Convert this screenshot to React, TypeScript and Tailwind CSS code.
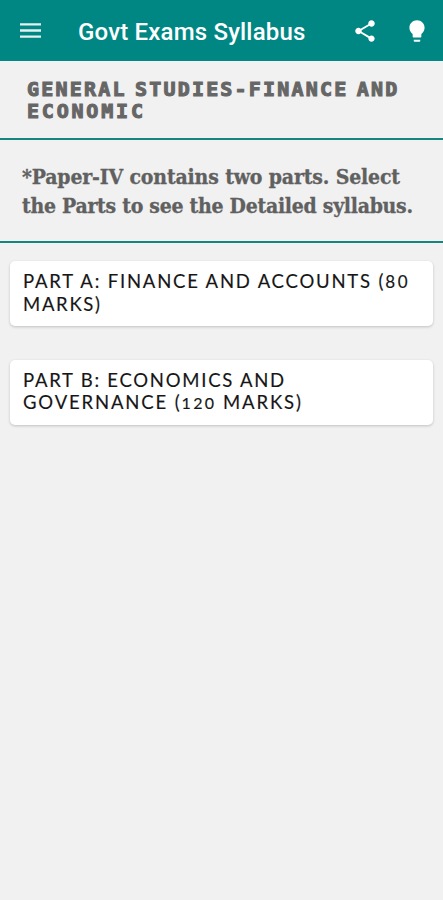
import React from 'react';
import { MdLightbulb, MdShare } from 'react-icons/md';

const Header: React.FC = () => (
  <header className="flex h-[61px] items-center bg-[#008784] pl-[18px] pr-[13px] text-white">
    <button type="button" aria-label="Menu" className="flex size-[26px] items-center justify-center">
      <svg viewBox="0 0 26 26" className="size-[26px]" fill="none" stroke="#e0f2f1" strokeWidth="2.4">
        <path d="M2 6.4h21M2 12.5h21M2 18.6h21" />
      </svg>
    </button>
    <h1 className="ml-[34px] mt-[2px] whitespace-nowrap font-['Roboto',sans-serif] text-[24px] font-medium leading-[30px] tracking-[0.18px]">
      Govt Exams Syllabus
    </h1>
    <div className="ml-auto flex items-center gap-[26px]">
      <button type="button" aria-label="Share">
        <MdShare className="size-[26px]" />
      </button>
      <button type="button" aria-label="Tips">
        <MdLightbulb className="size-[26px]" />
      </button>
    </div>
  </header>
);

const PartCard: React.FC<{ children: React.ReactNode }> = ({ children }) => (
  <button
    type="button"
    className="flex h-[65px] w-full flex-col justify-start rounded-[5px] bg-white px-[13px] pt-[9px] text-left font-['Lato',sans-serif] text-[18.5px] leading-[22px] text-[#161616] shadow-[0_1px_3px_rgba(0,0,0,0.2)] [-webkit-text-stroke:0.15px_#161616]"
  >
    {children}
  </button>
);

export default function App() {
  return (
    <div className="min-h-screen bg-[#f1f1f1]">
      <Header />

      <h2 className="h-[79px] whitespace-nowrap border-b-2 border-[#168582] pl-[27px] pt-[17px] font-['DejaVu_Sans_Mono',monospace] text-[20px] font-bold leading-[22px] text-[#666] [-webkit-text-stroke:1.1px_#666]">
        <span className="block tracking-[2.2px] [word-spacing:-6px]">GENERAL STUDIES-FINANCE AND</span>
        <span className="block tracking-[2.8px]">ECONOMIC</span>
      </h2>

      <p className="h-[103px] whitespace-nowrap border-b-2 border-[#168582] pl-[22px] pt-[22px] font-['DejaVu_Serif_Condensed','DejaVu_Serif',serif] text-[21px] font-bold leading-[29px] text-[#606060] [-webkit-text-stroke:0.3px_#606060]">
        <span className="block tracking-[-0.14px]">*Paper-IV contains two parts. Select</span>
        <span className="block tracking-[-0.26px]">the Parts to see the Detailed syllabus.</span>
      </p>

      <main className="flex flex-col gap-[34px] px-[10px] pt-[18px]">
        <PartCard>
          <span className="block whitespace-nowrap tracking-[1.8px]">
            PART A: FINANCE AND ACCOUNTS (<span className="text-[17px] tracking-[2.8px]">80</span>
          </span>
          <span className="block tracking-[1.7px]">MARKS)</span>
        </PartCard>
        <PartCard>
          <span className="block tracking-[1.75px]">PART B: ECONOMICS AND</span>
          <span className="block whitespace-nowrap tracking-[1.85px]">
            GOVERNANCE (<span className="text-[16px] tracking-[2.4px]">120</span> MARKS)
          </span>
        </PartCard>
      </main>
    </div>
  );
}
